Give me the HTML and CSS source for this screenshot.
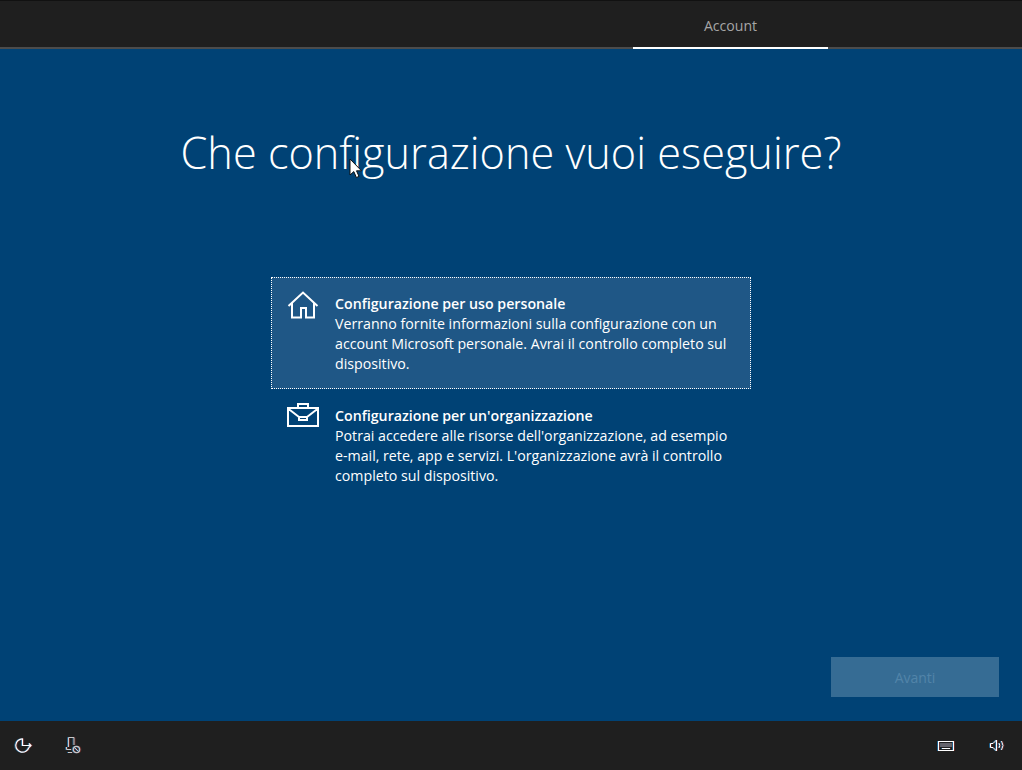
FILE: index.html
```html
<!DOCTYPE html>
<html lang="it">
<head>
    <meta charset="UTF-8">
    <meta name="viewport" content="width=device-width, initial-scale=1.0">
    <title>Configurazione</title>
    <link rel="stylesheet" href="styles.css">
</head>
<body>
    <div class="header">
        <div class="tab-active">Account</div>
    </div>

    <div class="main">
        <h1 class="title">Che configurazione vuoi eseguire?</h1>

        <div class="options">
            <div class="option option-selected">
                <svg class="option-icon" width="32" height="28" viewBox="0 0 32 28">
                    <path d="M1.5 15 L16 1.5 L30.5 15 M5 12 V26.5 H14 V17 H19 V26.5 H27 V12" fill="none" stroke="#fff" stroke-width="2"/>
                </svg>
                <div class="option-text">
                    <div class="option-title">Configurazione per uso personale</div>
                    <div>Verranno fornite informazioni sulla configurazione con un account Microsoft personale. Avrai il controllo completo sul dispositivo.</div>
                </div>
            </div>
            <div class="option">
                <svg class="option-icon" width="32" height="24" viewBox="0 0 32 24">
                    <path d="M1 5 H31 V23 H1 Z M11 5 V1 H21 V5 M1 5.5 L12 14 M31 5.5 L20 14 M12 14 H20 V17 H12 Z" fill="none" stroke="#fff" stroke-width="2"/>
                </svg>
                <div class="option-text">
                    <div class="option-title">Configurazione per un'organizzazione</div>
                    <div>Potrai accedere alle risorse dell'organizzazione, ad esempio e-mail, rete, app e servizi. L'organizzazione avrà il controllo completo sul dispositivo.</div>
                </div>
            </div>
        </div>

        <div class="actions">
            <button class="btn-next" disabled>Avanti</button>
        </div>

        <!-- mouse pointer caught in the capture -->
        <svg class="cursor" width="14" height="21" viewBox="0 0 14 21">
            <path d="M1 1 V17 L4.8 13.6 L7.4 19.5 L10 18.4 L7.5 12.8 H12.5 Z" fill="#fff" stroke="#111" stroke-width="1"/>
        </svg>
    </div>

    <div class="footer">
        <div class="footer-group">
            <svg class="tray-icon" width="17" height="15" viewBox="0 0 17 15">
                <path d="M7.5 0.8 A6.7 6.7 0 1 0 13.9 9.5" fill="none" stroke="#fff" stroke-width="1.2"/>
                <path d="M7.5 0.5 V7.5 H16 M14 5.5 L16 7.5 L14 9.5" fill="none" stroke="#fff" stroke-width="1.2"/>
            </svg>
            <svg class="tray-icon" width="15" height="17" viewBox="0 0 15 17">
                <path d="M2.5 10 V0.5 H8 V8 M0.5 10 V12.5 H5 M2 15.5 H6" fill="none" stroke="#c8c8c8" stroke-width="1"/>
                <circle cx="10.5" cy="12.5" r="3.2" fill="none" stroke="#c8c8c8" stroke-width="1.2"/>
                <path d="M8.3 10.3 L12.7 14.7" stroke="#c8c8c8" stroke-width="1"/>
            </svg>
        </div>
        <div class="footer-group footer-group-right">
            <svg class="tray-icon" width="16" height="10" viewBox="0 0 16 10">
                <rect x="0.5" y="0.5" width="15" height="9" fill="none" stroke="#fff"/>
                <path d="M2.5 3 H13.5 M2.5 5 H13.5" stroke="#fff" stroke-dasharray="1 1"/>
                <path d="M4 7.5 H12" stroke="#fff"/>
            </svg>
            <svg class="tray-icon" width="15" height="13" viewBox="0 0 15 13">
                <path d="M0.5 4.5 H3 L6.5 1 V12 L3 8.5 H0.5 Z" fill="none" stroke="#fff"/>
                <path d="M9 4 Q10.5 6.5 9 9 M11.5 2 Q14.5 6.5 11.5 11" fill="none" stroke="#fff"/>
            </svg>
        </div>
    </div>
</body>
</html>
```

FILE: styles.css
```css
* {
    margin: 0;
    padding: 0;
    box-sizing: border-box;
    font-family: "Open Sans", "Noto Sans", sans-serif;
}

html, body {
    height: 100%;
    overflow: hidden;
}

body {
    display: flex;
    flex-direction: column;
    background-color: #004275;
    color: #fff;
}

.header {
    height: 49px;
    flex: none;
    display: flex;
    padding-left: 633px;
    background-color: #1f1f1f;
    border-top: 1px solid #111;
    border-bottom: 2px solid #4c4c4c;
}

.tab-active {
    width: 195px;
    height: 48px;
    padding-top: 15px;
    text-align: center;
    font-size: 14.1px;
    line-height: 20px;
    color: #a6a6a6;
    border-bottom: 2px solid #fff;
}

.main {
    flex: 1;
    position: relative;
    display: flex;
    flex-direction: column;
    align-items: center;
}

.title {
    margin-top: 74px;
    font-size: 43.25px;
    line-height: 60px;
    font-weight: 300;
    text-align: center;
}

.options {
    width: 480px;
    margin-top: 94px;
    font-size: 14.2px;
    line-height: 20px;
}

.option {
    display: flex;
    padding: 16px 15px 14px 15px;
    border: 1px solid transparent;
}

.option-selected {
    background-color: #1f5786;
    border: 1px dotted #fff;
}

.option-icon {
    flex: none;
    margin-top: -3px;
    margin-right: 16px;
}

.option-text {
    width: 402px;
    flex: none;
}

.option-title {
    font-weight: 600;
}

.actions {
    position: absolute;
    right: 23px;
    bottom: 0;
    padding-bottom: 24px;
}

.btn-next {
    display: block;
    width: 168px;
    height: 40px;
    border: none;
    background-color: #366c94;
    color: #5284a9;
    font-size: 14px;
}

.cursor {
    position: absolute;
    left: 349px;
    top: 109px;
}

.footer {
    height: 49px;
    flex: none;
    display: flex;
    justify-content: space-between;
    align-items: center;
    padding: 0 17px 0 15px;
    background-color: #1f1f1f;
}

.footer-group {
    display: flex;
    align-items: center;
    gap: 34px;
}

.footer-group-right {
    gap: 36px;
}

/* subpixel colour fringes seen on the tray glyphs */
.tray-icon {
    filter: drop-shadow(-1px 0 0 rgba(30, 150, 230, 0.55)) drop-shadow(1px 0 0 rgba(200, 60, 50, 0.4));
}
```
